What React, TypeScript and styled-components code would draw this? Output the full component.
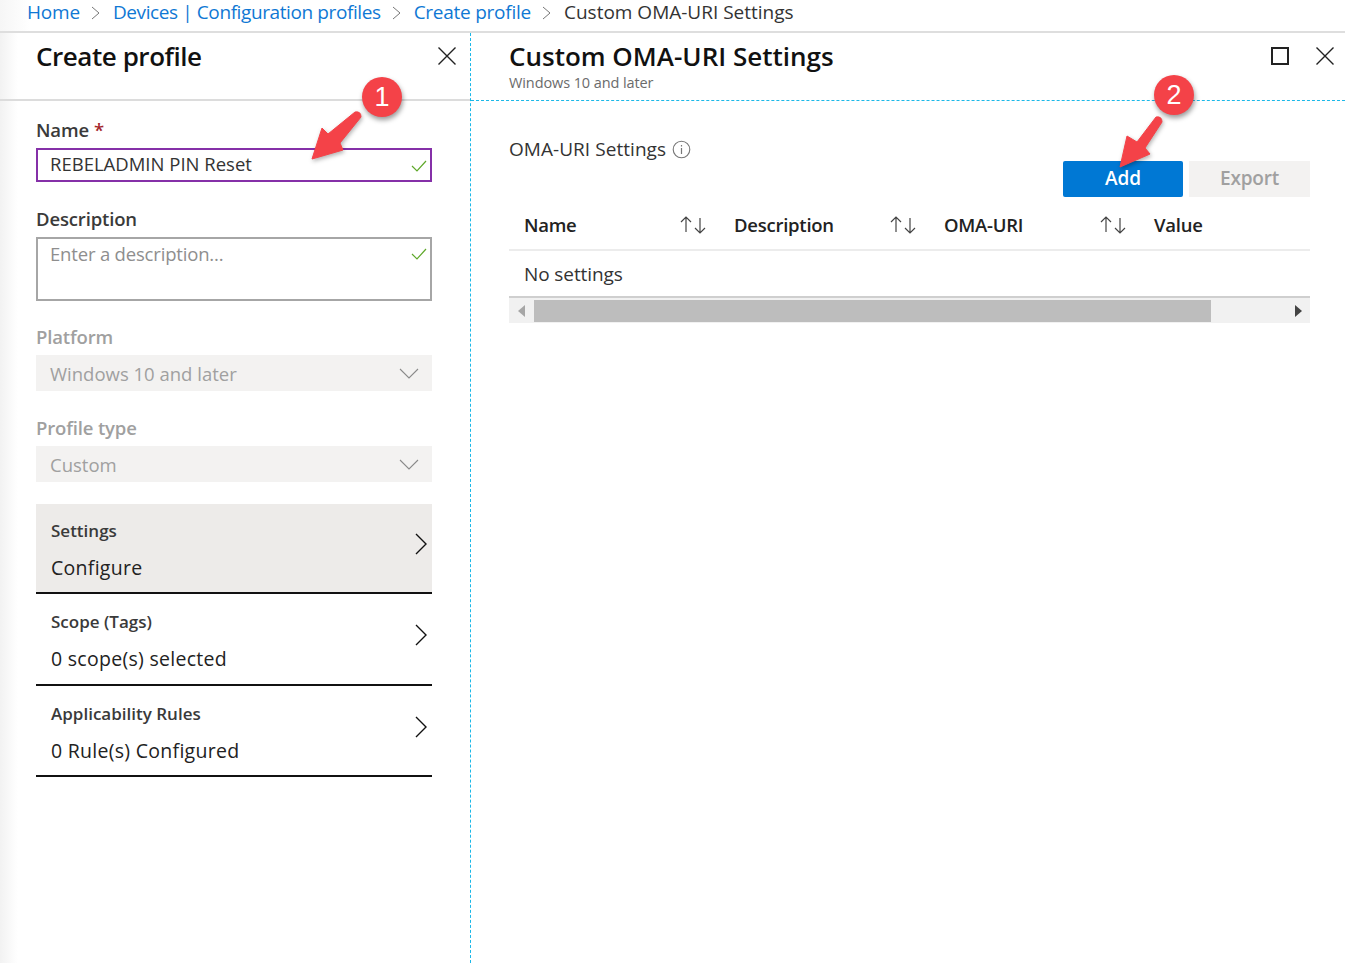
import React from "react";
import styled, { createGlobalStyle } from "styled-components";

const Global = createGlobalStyle`
  html, body { margin: 0; padding: 0; background: #fff; }
  body { font-family: "Open Sans", "Noto Sans", "Liberation Sans", sans-serif; color: #1b1b1b; }
  * { box-sizing: border-box; }
`;

const Page = styled.div`
  position: relative;
  width: 1345px;
  height: 963px;
  overflow: hidden;
  display: flex;
  flex-direction: column;
`;

const Breadcrumb = styled.nav`
  flex: 0 0 33px;
  display: flex;
  align-items: flex-start;
  padding: 0 0 0 27px;
  background: linear-gradient(90deg, #f6f6f6 0, #fff 30px);
  border-bottom: 2px solid #dedede;
  font-size: 19px;
  line-height: 25px;
`;

const Crumb = styled.span<{ $current?: boolean; $spacing: number }>`
  color: ${(p) => (p.$current ? "#333" : "#0f78d4")};
  letter-spacing: ${(p) => p.$spacing}px;
`;

const CrumbSep = styled.svg`
  width: 12px;
  height: 16px;
  margin: 5px 11px 0 10px;
  flex: none;
`;

const Panels = styled.div`
  flex: 1;
  display: flex;
  min-height: 0;
`;

const LeftPanel = styled.section`
  flex: 0 0 470px;
  display: flex;
  flex-direction: column;
  background: linear-gradient(90deg, #f2f2f2 0, #fff 18px);
`;

const RightPanel = styled.section`
  flex: 1;
  min-width: 0;
  display: flex;
  flex-direction: column;
  border-left: 1px dashed #1bb8e8;
`;

const LeftHeader = styled.header`
  flex: 0 0 68px;
  padding: 3px 13px 0 36px;
  display: flex;
  justify-content: space-between;
  border-bottom: 2px solid #dcdcdc;
`;

const Title = styled.h1<{ $spacing: number }>`
  margin: 0;
  font-size: 26px;
  line-height: 40px;
  font-weight: 600;
  letter-spacing: ${(p) => p.$spacing}px;
  color: #111;
`;

const CloseIcon = styled.svg`
  width: 20px;
  height: 20px;
  margin-top: 10px;
  flex: none;
`;

const Form = styled.div`
  padding: 16px 38px 0 36px;
  display: flex;
  flex-direction: column;
`;

const Label = styled.label<{ $off?: boolean; $gap?: number }>`
  display: block;
  font-size: 18.5px;
  line-height: 26px;
  height: 26px;
  font-weight: 600;
  letter-spacing: -0.15px;
  color: ${(p) => (p.$off ? "#a0a0a0" : "#3a3a3a")};
  margin-top: ${(p) => p.$gap ?? 0}px;
`;

const Star = styled.span`
  color: #a4262c;
  margin-left: 5px;
`;

const Input = styled.div<{ $focus?: boolean; $h: number }>`
  position: relative;
  height: ${(p) => p.$h}px;
  margin-top: 5px;
  border: 2px solid ${(p) => (p.$focus ? "#8530a8" : "#a6a6a6")};
  padding-left: 12px;
  font-size: 18.5px;
  line-height: ${(p) => (p.$focus ? 27 : 30)}px;
  letter-spacing: ${(p) => (p.$focus ? "0" : "-0.18px")};
  color: ${(p) => (p.$focus ? "#333" : "#8e8e8e")};
`;

const Check = styled.svg<{ $top: number }>`
  position: absolute;
  right: 3px;
  top: ${(p) => p.$top}px;
  width: 16px;
  height: 14px;
`;

const Select = styled.div`
  height: 36px;
  margin-top: 5px;
  background: #f3f2f1;
  padding: 0 13px 0 14px;
  display: flex;
  align-items: center;
  justify-content: space-between;
  font-size: 18.5px;
  letter-spacing: 0;
  color: #a0a0a0;
`;

const SelectArrow = styled.svg`
  width: 20px;
  height: 12px;
  margin-top: 2px;
  flex: none;
`;

const Nav = styled.div<{ $on?: boolean; $h: number; $gap?: number }>`
  height: ${(p) => p.$h}px;
  margin-top: ${(p) => p.$gap ?? 0}px;
  background: ${(p) => (p.$on ? "#edebe9" : "transparent")};
  border-bottom: 2px solid #111;
  padding: ${(p) => (p.$on ? 13 : 14)}px 4px 0 15px;
  display: flex;
  justify-content: space-between;
  align-items: flex-start;
`;

const NavText = styled.div`
  display: flex;
  flex-direction: column;
`;

const NavTitle = styled.span`
  font-size: 17px;
  line-height: 28px;
  font-weight: 600;
  letter-spacing: 0;
  color: #3a3a3a;
`;

const NavValue = styled.span`
  margin-top: 9px;
  font-size: 19.5px;
  line-height: 28px;
  letter-spacing: 0.28px;
  color: #222;
`;

const NavArrow = styled.svg`
  width: 14px;
  height: 24px;
  margin-top: 15px;
  flex: none;
`;

const RightHeader = styled.header`
  flex: 0 0 68px;
  padding: 3px 10px 0 38px;
  display: flex;
  justify-content: space-between;
  border-bottom: 1px dashed #1bb8e8;
`;

const HeadText = styled.div`
  display: flex;
  flex-direction: column;
`;

const Subtitle = styled.span`
  font-size: 14.5px;
  line-height: 18px;
  margin-top: -2px;
  letter-spacing: -0.1px;
  color: #6b6b6b;
`;

const WinControls = styled.div`
  display: flex;
  gap: 26px;
`;

const MaxBox = styled.span`
  width: 18px;
  height: 18px;
  margin-top: 11px;
  border: 2px solid #222;
`;

const Content = styled.div`
  padding: 0 35px 0 38px;
  display: flex;
  flex-direction: column;
`;

const SectionRow = styled.div`
  height: 60px;
  display: flex;
  align-items: flex-end;
`;

const SectionLabel = styled.span`
  font-size: 19px;
  line-height: 24px;
  letter-spacing: 0.05px;
  color: #333;
  display: flex;
  align-items: center;
  gap: 6px;
`;

const Actions = styled.div`
  display: flex;
  justify-content: flex-end;
  gap: 6px;
`;

const Button = styled.div<{ $primary?: boolean }>`
  width: ${(p) => (p.$primary ? 120 : 121)}px;
  height: 36px;
  padding-bottom: 2px;
  border-radius: ${(p) => (p.$primary ? 2 : 0)}px;
  background: ${(p) => (p.$primary ? "#0078d4" : "#f3f2f1")};
  color: ${(p) => (p.$primary ? "#fff" : "#a0a0a0")};
  font-size: 19px;
  font-weight: 600;
  letter-spacing: ${(p) => (p.$primary ? "0" : "-0.2px")};
  display: flex;
  align-items: center;
  justify-content: center;
`;

const HeadRow = styled.div`
  height: 54px;
  display: grid;
  grid-template-columns: repeat(3, 210px) 1fr;
  padding: 3px 0 0 15px;
  border-bottom: 2px solid #ececec;
`;

const HeadCell = styled.div`
  display: flex;
  align-items: center;
  font-size: 18.5px;
  font-weight: 600;
  letter-spacing: -0.25px;
  color: #222;
  padding-right: 28px;
  justify-content: space-between;
`;

const Empty = styled.div`
  height: 47px;
  padding: 9px 0 0 15px;
  font-size: 19px;
  line-height: 28px;
  letter-spacing: -0.1px;
  color: #333;
  border-bottom: 2px solid #cfcfcf;
`;

const Scrollbar = styled.div`
  height: 25px;
  display: flex;
  align-items: center;
  background: #f1f1f1;
`;

const ScrollBtn = styled.div`
  width: 25px;
  height: 100%;
  display: flex;
  align-items: center;
  justify-content: center;
  flex: none;
`;

const ScrollThumb = styled.div`
  width: 677px;
  height: 22px;
  background: #bdbdbd;
`;

const ScrollRest = styled.div`
  flex: 1;
`;

const Overlay = styled.svg`
  position: absolute;
  left: 0;
  top: 0;
  pointer-events: none;
  filter: drop-shadow(1px 2px 2px rgba(0, 0, 0, 0.3));
`;

const Marker = styled.span<{ $x: number; $y: number }>`
  position: absolute;
  left: ${(p) => p.$x}px;
  top: ${(p) => p.$y}px;
  width: 40px;
  height: 40px;
  border-radius: 50%;
  background: #f44248;
  box-shadow: 1px 3px 5px rgba(0, 0, 0, 0.4);
  color: #fff;
  font-family: "Liberation Sans", sans-serif;
  font-size: 27px;
  line-height: 40px;
  text-align: center;
`;

const Sep = () => (
  <CrumbSep viewBox="0 0 12 16">
    <path d="M2 2l7 6-7 6" fill="none" stroke="#777" strokeWidth="1" />
  </CrumbSep>
);

const Close = () => (
  <CloseIcon viewBox="0 0 20 20">
    <path d="M1.500 1.500l17 17M18.500 1.500l-17 17" stroke="#222" strokeWidth="1.400" fill="none" />
  </CloseIcon>
);

const Tick = ({ top }: { top: number }) => (
  <Check $top={top} viewBox="0 0 16 14">
    <path d="M1 7l5 5L15 2" fill="none" stroke="#5fa82a" strokeWidth="1.200" />
  </Check>
);

const Chevron = () => (
  <SelectArrow viewBox="0 0 20 12">
    <path d="M1 1l9 9 9-9" fill="none" stroke="#8a8a8a" strokeWidth="1.100" />
  </SelectArrow>
);

const NavChevron = () => (
  <NavArrow viewBox="0 0 14 24">
    <path d="M2 2l10 10L2 22" fill="none" stroke="#111" strokeWidth="1.400" />
  </NavArrow>
);

const Sort = () => (
  <svg width="26" height="20" viewBox="0 0 26 20">
    <path d="M6 17V2M1 7l5-5 5 5M20 3v15M15 13l5 5 5-5" fill="none" stroke="#444" strokeWidth="1.200" />
  </svg>
);

const Info = () => (
  <svg width="19" height="19" viewBox="0 0 19 19">
    <circle cx="9.500" cy="9.500" r="8.300" fill="none" stroke="#777" strokeWidth="1.100" />
    <path d="M9.500 8v6M9.500 5v1.500" stroke="#777" strokeWidth="1.200" fill="none" />
  </svg>
);

const columns = ["Name", "Description", "OMA-URI"];

const navItems = [
  { title: "Settings", value: "Configure", on: true, h: 90, gap: 22 },
  { title: "Scope (Tags)", value: "0 scope(s) selected", on: false, h: 92, gap: 0 },
  { title: "Applicability Rules", value: "0 Rule(s) Configured", on: false, h: 91, gap: 0 },
];

export default function App() {
  return (
    <Page>
      <Global />
      <Breadcrumb>
        <Crumb $spacing={-0.2}>Home</Crumb>
        <Sep />
        <Crumb $spacing={-0.4}>Devices | Configuration profiles</Crumb>
        <Sep />
        <Crumb $spacing={-0.25}>Create profile</Crumb>
        <Sep />
        <Crumb $current $spacing={0}>Custom OMA-URI Settings</Crumb>
      </Breadcrumb>
      <Panels>
        <LeftPanel>
          <LeftHeader>
            <Title $spacing={-0.45}>Create profile</Title>
            <Close />
          </LeftHeader>
          <Form>
            <Label>
              Name<Star>*</Star>
            </Label>
            <Input $focus $h={34}>
              REBELADMIN PIN Reset
              <Tick top={9} />
            </Input>
            <Label $gap={24}>Description</Label>
            <Input $h={64}>
              Enter a description...
              <Tick top={8} />
            </Input>
            <Label $off $gap={23}>Platform</Label>
            <Select>
              Windows 10 and later
              <Chevron />
            </Select>
            <Label $off $gap={24}>Profile type</Label>
            <Select>
              Custom
              <Chevron />
            </Select>
            {navItems.map((n) => (
              <Nav key={n.title} $on={n.on} $h={n.h} $gap={n.gap}>
                <NavText>
                  <NavTitle>{n.title}</NavTitle>
                  <NavValue>{n.value}</NavValue>
                </NavText>
                <NavChevron />
              </Nav>
            ))}
          </Form>
        </LeftPanel>
        <RightPanel>
          <RightHeader>
            <HeadText>
              <Title $spacing={0}>Custom OMA-URI Settings</Title>
              <Subtitle>Windows 10 and later</Subtitle>
            </HeadText>
            <WinControls>
              <MaxBox />
              <Close />
            </WinControls>
          </RightHeader>
          <Content>
            <SectionRow>
              <SectionLabel>
                OMA-URI Settings
                <Info />
              </SectionLabel>
            </SectionRow>
            <Actions>
              <Button $primary>Add</Button>
              <Button>Export</Button>
            </Actions>
            <HeadRow>
              {columns.map((c) => (
                <HeadCell key={c}>
                  {c}
                  <Sort />
                </HeadCell>
              ))}
              <HeadCell>Value</HeadCell>
            </HeadRow>
            <Empty>No settings</Empty>
            <Scrollbar>
              <ScrollBtn>
                <svg width="8" height="12" viewBox="0 0 8 12">
                  <path d="M7 0v12L0 6z" fill="#a6a6a6" />
                </svg>
              </ScrollBtn>
              <ScrollThumb />
              <ScrollRest />
              <ScrollBtn>
                <svg width="8" height="12" viewBox="0 0 8 12">
                  <path d="M1 0v12l7-6z" fill="#444" />
                </svg>
              </ScrollBtn>
            </Scrollbar>
          </Content>
        </RightPanel>
      </Panels>
      <Overlay width="1345" height="963" viewBox="0 0 1345 963">
        <path
          d="M312 159L322 128L328 134L355 112Q361 111 361 117L340 143L343 150Z"
          fill="#f44248"
          stroke="#f44248"
          strokeWidth="1"
          strokeLinejoin="round"
        />
        <path
          d="M1120 167L1127 136L1137 142L1156 117Q1162 116 1162 122L1145 148L1150 154Z"
          fill="#f44248"
          stroke="#f44248"
          strokeWidth="1"
          strokeLinejoin="round"
        />
      </Overlay>
      <Marker $x={362} $y={77}>1</Marker>
      <Marker $x={1154} $y={75}>2</Marker>
    </Page>
  );
}
